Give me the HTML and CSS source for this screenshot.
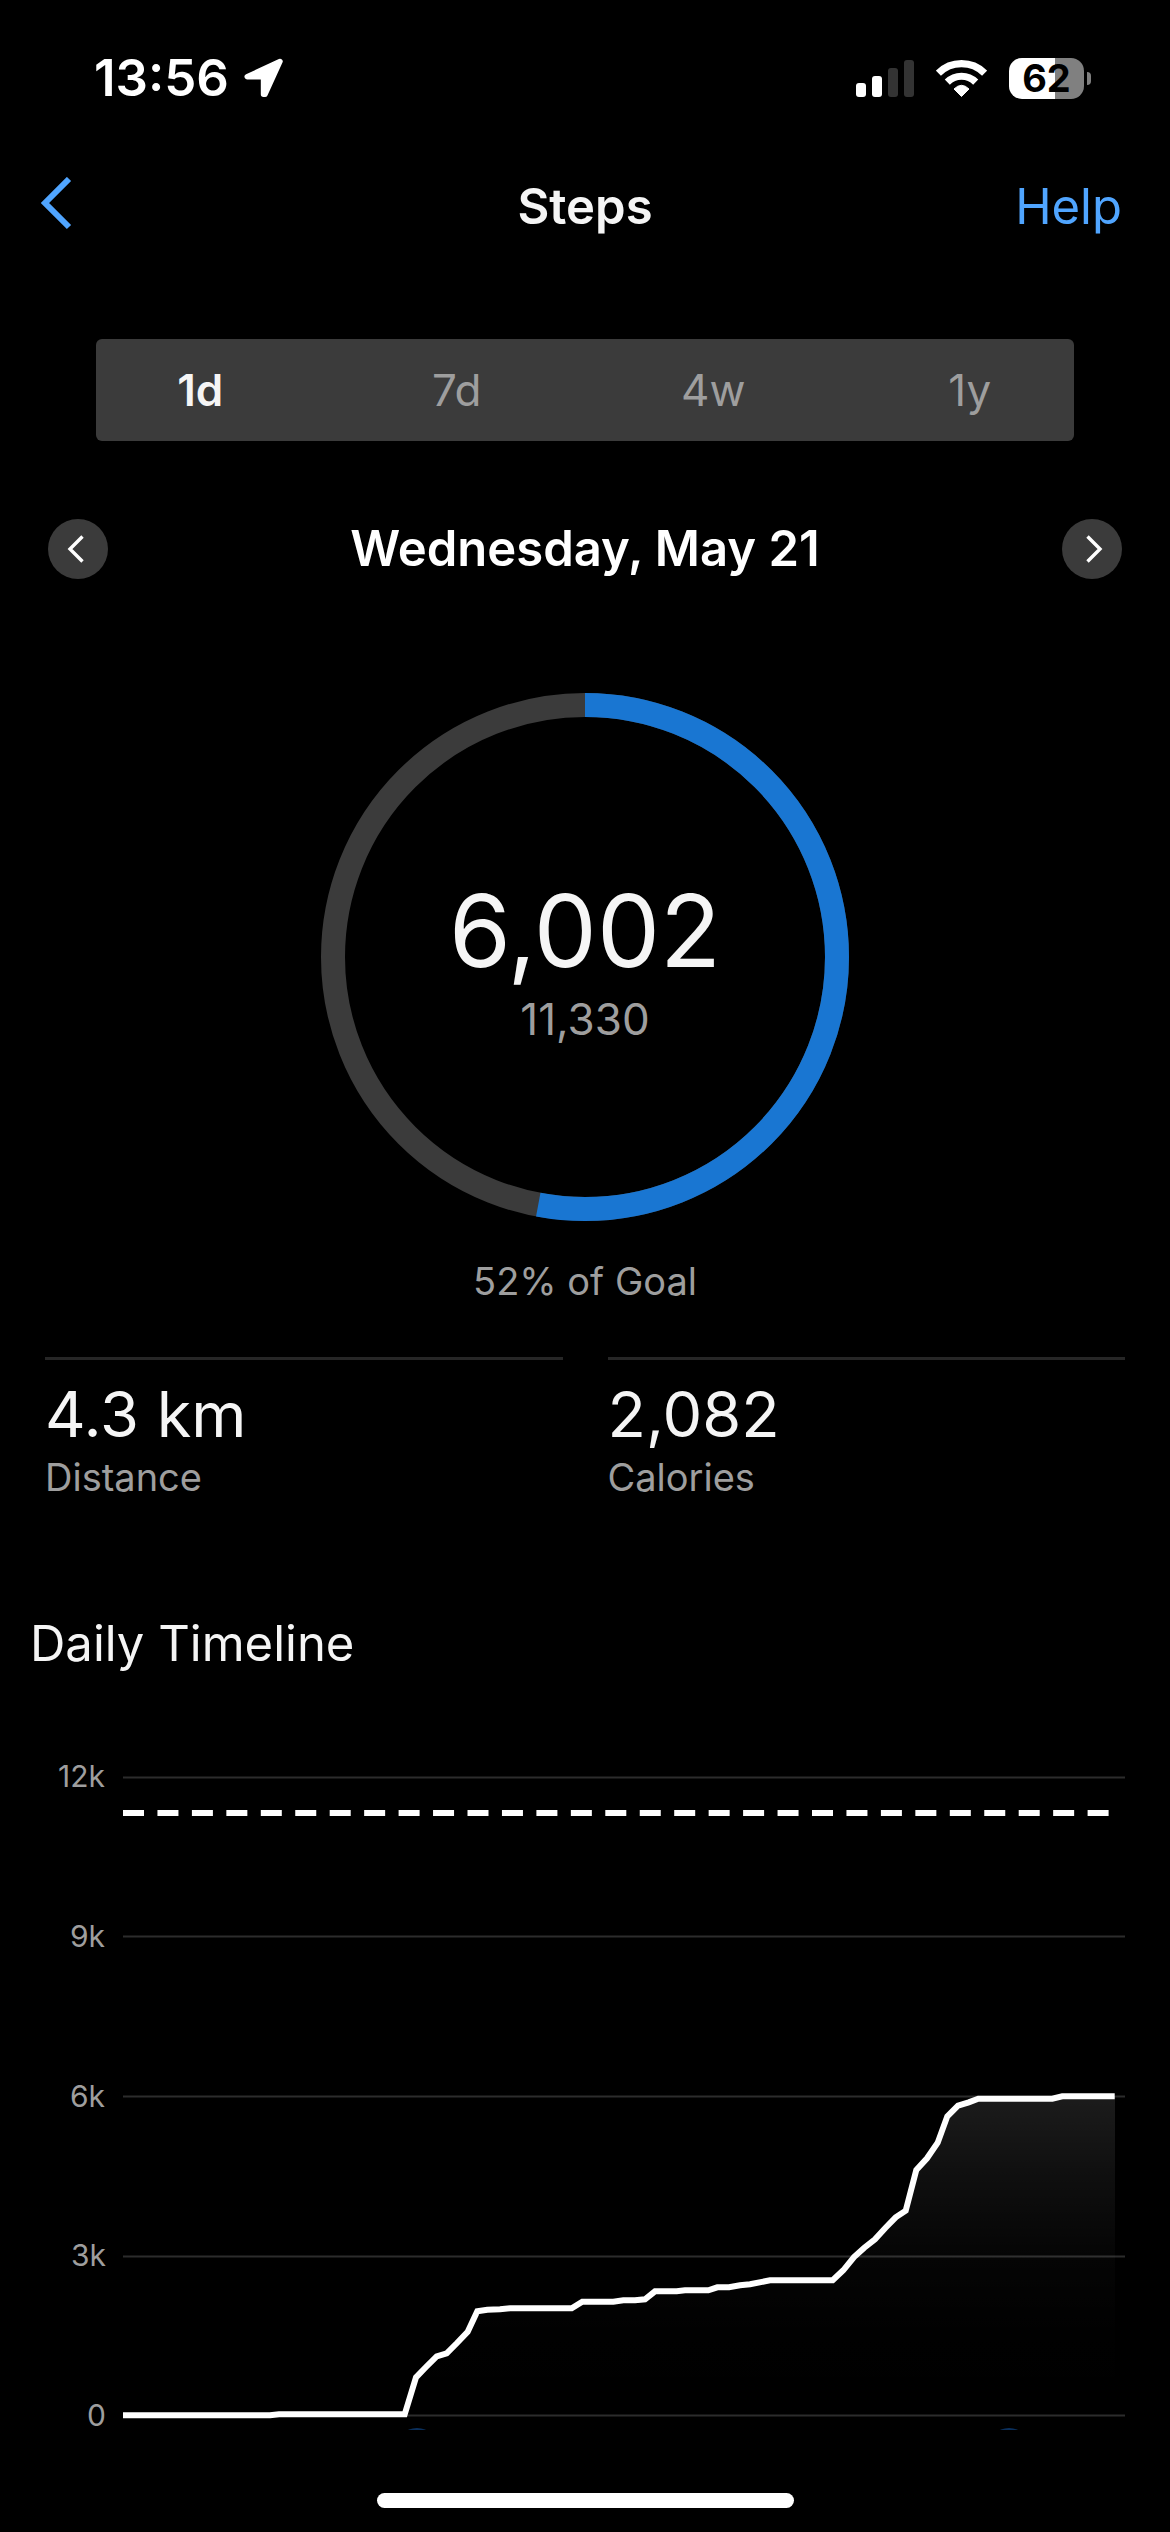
FILE: index.html
```html
<!DOCTYPE html>
<html lang="en">
<head>
    <meta charset="UTF-8">
    <meta name="viewport" content="width=device-width, initial-scale=1.0">
    <title>Steps</title>
    <link rel="stylesheet" href="styles.css">
</head>
<body>
    <div class="status-bar">
        <div class="status-left">
            <span>13:56</span>
            <svg width="40" height="40" viewBox="0 0 40 40" aria-hidden="true">
                <path d="M36 3.5 L3.2 18.7 H19.5 V36.3 H21 Z" fill="#fff" stroke="#fff" stroke-width="5.4" stroke-linejoin="round"/>
            </svg>
        </div>
        <div class="status-right">
            <svg width="58" height="38" viewBox="0 0 58 38" aria-hidden="true">
                <rect x="0" y="24" width="10" height="14" rx="3" fill="#fff"/>
                <rect x="16" y="17" width="10" height="21" rx="3" fill="#fff"/>
                <rect x="32" y="9" width="10" height="29" rx="3" fill="#333"/>
                <rect x="48" y="1" width="10" height="37" rx="3" fill="#333"/>
            </svg>
            <svg width="51" height="38" viewBox="0 0 51 38" aria-hidden="true">
                <g fill="none" stroke="#fff" stroke-width="7.2">
                    <path d="M2.4 14.2 A32.8 32.8 0 0 1 48.6 14.2"/>
                    <path d="M11.3 23.1 A20.2 20.2 0 0 1 39.7 23.1"/>
                </g>
                <path d="M25.5 37.5 L18 30 Q25.5 22.6 33 30 Z" fill="#fff" stroke="#fff" stroke-width="1" stroke-linejoin="round"/>
            </svg>
            <div class="battery">
                <span class="battery-level">62</span>
                <span class="battery-cap"></span>
            </div>
        </div>
    </div>

    <header class="nav">
        <button class="back" aria-label="Back">
            <svg width="34" height="60" viewBox="0 0 34 60" aria-hidden="true">
                <path d="M29 2 L5 26 L29 50" fill="none" stroke="#50a5ff" stroke-width="6"/>
            </svg>
        </button>
        <h1>Steps</h1>
        <a class="help" href="#help">Help</a>
    </header>

    <main>
        <div class="range">
            <button class="active" aria-pressed="true">1d</button>
            <button aria-pressed="false">7d</button>
            <button aria-pressed="false">4w</button>
            <button aria-pressed="false">1y</button>
        </div>

        <div class="date-nav">
            <button class="round" aria-label="Previous day">
                <svg width="60" height="60" viewBox="0 0 60 60" aria-hidden="true">
                    <path d="M34.5 17.5 L22 30 L34.5 42.5" fill="none" stroke="#fff" stroke-width="3.4"/>
                </svg>
            </button>
            <h2>Wednesday, May 21</h2>
            <button class="round" aria-label="Next day">
                <svg width="60" height="60" viewBox="0 0 60 60" aria-hidden="true">
                    <path d="M25.5 17.5 L38 30 L25.5 42.5" fill="none" stroke="#fff" stroke-width="3.4"/>
                </svg>
            </button>
        </div>

        <div class="ring">
            <svg viewBox="0 0 528 528" aria-hidden="true">
                <circle cx="264" cy="264" r="252" fill="none" stroke="#3b3b3b" stroke-width="24"/>
                <circle cx="264" cy="264" r="252" fill="none" stroke="#1976d2" stroke-width="24" pathLength="100" stroke-dasharray="52.97 100" transform="rotate(-90 264 264)"/>
            </svg>
            <div class="ring-text">
                <strong>6,002</strong>
                <span>11,330</span>
            </div>
        </div>
        <p class="goal">52% of Goal</p>

        <div class="stats">
            <div class="stat">
                <div class="value">4.3 km</div>
                <div class="label">Distance</div>
            </div>
            <div class="stat">
                <div class="value">2,082</div>
                <div class="label">Calories</div>
            </div>
        </div>

        <h2 class="section-title">Daily Timeline</h2>
        <svg class="chart" viewBox="0 0 1170 690" role="img" aria-label="Steps over the day">
            <defs>
                <linearGradient id="area" x1="0" y1="356" x2="0" y2="676" gradientUnits="userSpaceOnUse">
                    <stop offset="0" stop-color="#fff" stop-opacity="0.11"/>
                    <stop offset="0.25" stop-color="#fff" stop-opacity="0.06"/>
                    <stop offset="0.5" stop-color="#fff" stop-opacity="0.02"/>
                    <stop offset="0.75" stop-color="#fff" stop-opacity="0.004"/>
                    <stop offset="1" stop-color="#fff" stop-opacity="0"/>
                </linearGradient>
            </defs>
            <path class="grid" d="M123 37.5 H1125 M123 196.5 H1125 M123 356.5 H1125 M123 516.5 H1125 M123 675.5 H1125"/>
            <g class="axis">
                <text x="105" y="47">12k</text>
                <text x="105" y="207">9k</text>
                <text x="105" y="367">6k</text>
                <text x="106" y="526">3k</text>
                <text x="106" y="686">0</text>
            </g>
            <path d="M123 73 H1115" stroke="#fff" stroke-width="6" stroke-dasharray="21 13.45"/>
            <path fill="url(#area)" d="M405 674 L416 637 L437 616 L447 613 L468 592 L477 571 L510 568 H572 L582 562 L645 559 L655 551 L708 550 L770 540 H833 L843 530 L854 517 L875 499 L896 477 L906 471 L916 430 L927 418 L938 403 L947 376 L958 366 L978 359 H1052 L1062 356 H1115 V676 H405 Z"/>
            <path class="line" d="M123 675.3 H270 L279 674.3 H404.7 L416 637.3 L426 627 L436.7 616.3 L446.7 613.3 L457 603 L467.7 591.7 L477.3 571.3 L487.3 569.7 L500 569.3 L510 568.3 H571.7 L582.3 561.7 H613.3 L623.3 560.3 H635 L645 559.3 L655 551.3 H676.7 L685 550.3 H708.3 L717.3 547.3 H729 L740 545.3 L750 544.3 L770 540.3 H832.7 L843.3 530.3 L854 517 L864.3 507.7 L875 499.3 L885.3 488 L895.7 477.3 L905.7 470.7 L916.3 430 L927 418.3 L937.7 402.7 L947.3 376.3 L958 365.7 L968.7 362.3 L978.3 358.7 H1052.3 L1062.3 356.3 H1114.7"/>
            <circle cx="417" cy="709" r="21" fill="#0a2f5c"/>
            <circle cx="1009" cy="709" r="21" fill="#0a2f5c"/>
        </svg>
    </main>

    <div class="home-bar"></div>
</body>
</html>
```
FILE: styles.css
```css
* {
    box-sizing: border-box;
}
body {
    margin: 0;
    background-color: #000;
    color: #f5f5f5;
    font-family: Inter, "Liberation Sans", sans-serif;
    font-size: 49px;
    line-height: 60px;
}
button {
    padding: 0;
    border: none;
    background: none;
    color: inherit;
    font: inherit;
    cursor: pointer;
}
svg {
    display: block;
}
h1, h2, p {
    margin: 0;
}
h1, h2 {
    font-size: 49px;
    font-weight: 600;
}
.status-bar {
    display: flex;
    justify-content: space-between;
    align-items: center;
    height: 156px;
    padding: 0 79px 0 94px;
    color: #fff;
    font-size: 51px;
    font-weight: 600;
}
.status-left {
    display: flex;
    align-items: center;
    gap: 15px;
}
.status-right {
    display: flex;
    align-items: center;
    gap: 22px;
}
.battery {
    display: flex;
    align-items: center;
    gap: 3px;
}
.battery-level {
    width: 75px;
    border-radius: 13px;
    background: linear-gradient(to right, #fff 62%, #808080 62%);
    color: #000;
    font-size: 38px;
    font-weight: 700;
    line-height: 41px;
    text-align: center;
}
.battery-cap {
    width: 4px;
    height: 13px;
    border-radius: 0 4px 4px 0;
    background-color: #808080;
}
.nav {
    display: grid;
    grid-template-columns: 1fr auto 1fr;
    align-items: center;
    height: 102px;
    padding: 0 48px 0 40px;
}
.nav h1 {
    padding-left: 8px;
}
.back {
    justify-self: start;
}
.help {
    justify-self: end;
    color: #50a5ff;
    text-decoration: none;
}
.range {
    display: grid;
    grid-template-columns: repeat(4, 1fr);
    gap: 48px;
    height: 102px;
    margin: 81px 96px 0;
    border-radius: 6px;
    background-color: #3b3b3b;
    color: #9e9e9e;
    font-size: 44px;
}
.range .active {
    color: #f5f5f5;
    font-weight: 600;
}
.date-nav {
    display: flex;
    justify-content: space-between;
    align-items: center;
    margin-top: 78px;
    padding: 0 48px;
    color: #fff;
}
.round {
    border-radius: 50%;
    background-color: #3b3b3b;
}
.ring {
    display: grid;
    width: 528px;
    margin: 114px auto 0;
}
.ring > * {
    grid-area: 1 / 1;
}
.ring-text {
    display: flex;
    flex-direction: column;
    justify-content: center;
    padding-top: 12px;
    text-align: center;
}
.ring-text strong {
    font-size: 100px;
    font-weight: 400;
    line-height: 112px;
}
.ring-text span {
    color: #9e9e9e;
    font-size: 44px;
    line-height: 64px;
}
.goal {
    margin-top: 30px;
    color: #9e9e9e;
    font-size: 38px;
    text-align: center;
}
.stats {
    display: grid;
    grid-template-columns: 1fr 1fr;
    gap: 45px;
    margin-top: 46px;
    padding: 0 45px;
}
.stat {
    padding-top: 12px;
    border-top: 3px solid #262626;
}
.value {
    font-size: 63px;
    line-height: 84px;
}
.label {
    color: #9e9e9e;
    font-size: 38px;
    line-height: 42px;
}
.section-title {
    margin-top: 116px;
    padding: 0 30px;
    font-weight: 400;
}
.chart {
    width: 100%;
    margin-top: 66px;
}
.grid {
    stroke: #2c2c2c;
    stroke-width: 2;
}
.axis {
    fill: #9e9e9e;
    font-size: 30px;
    text-anchor: end;
}
.line {
    fill: none;
    stroke: #fff;
    stroke-width: 6;
}
.home-bar {
    width: 417px;
    height: 15px;
    margin: 63px auto 24px;
    border-radius: 8px;
    background-color: #fff;
}
```
